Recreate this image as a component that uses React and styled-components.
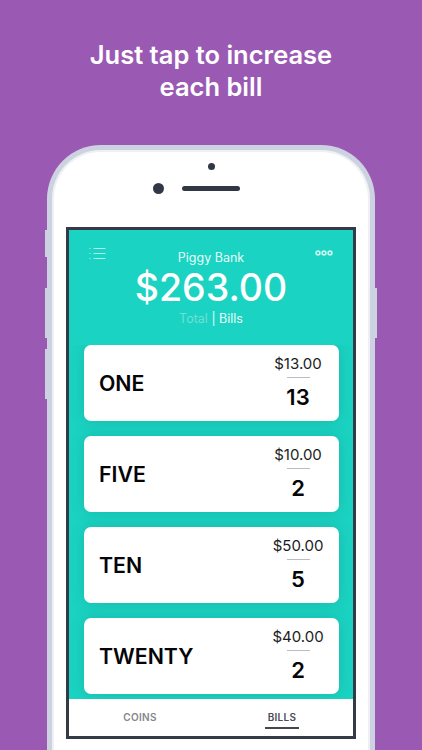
import styled, { createGlobalStyle } from "styled-components";

const GlobalStyle = createGlobalStyle`
  html, body {
    margin: 0;
    padding: 0;
    height: 750px;
    overflow: hidden;
    background: #9a5ab3;
    font-family: "Inter", "Liberation Sans", sans-serif;
  }
`;

const Page = styled.div`
  width: 422px;
  height: 750px;
  overflow: hidden;
  display: flex;
  flex-direction: column;
  align-items: center;
  background: #9a5ab3;
`;

const Headline = styled.h1`
  margin: 39px 0 0;
  font-size: 25.5px;
  line-height: 32px;
  font-weight: 600;
  color: #fff;
  text-align: center;
`;

const Phone = styled.div`
  position: relative;
  flex: none;
  box-sizing: border-box;
  width: 328px;
  height: 640px;
  margin-top: 42px;
  padding: 0 14px;
  background: #fff;
  border: 5px solid #cdd2e0;
  border-bottom: none;
  border-radius: 54px 54px 0 0;
  box-shadow: inset 0 0 0 2px #eef0f5;
`;

const SideButton = styled.span`
  position: absolute;
  top: ${(p) => p.$top}px;
  ${(p) => (p.$right ? "right: -7px;" : "left: -7px;")}
  width: 2px;
  height: ${(p) => p.$height}px;
  background: #cdd2e0;
`;

const Earpiece = styled.div`
  height: 77px;
  display: flex;
  flex-direction: column;
  align-items: center;
`;

const Camera = styled.span`
  width: 7px;
  height: 7px;
  margin-top: 13px;
  border-radius: 50%;
  background: #323745;
`;

const SpeakerRow = styled.div`
  position: relative;
  margin-top: 16px;
  width: 58px;
  height: 5px;
  border-radius: 3px;
  background: #323745;
`;

const FrontLens = styled.span`
  position: absolute;
  left: -29px;
  top: -3px;
  width: 11px;
  height: 11px;
  border-radius: 50%;
  background: #323745;
`;

const Screen = styled.div`
  box-sizing: border-box;
  width: 290px;
  height: 512px;
  display: flex;
  flex-direction: column;
  border: 3px solid #353a47;
  background: #1bd3c2;
`;

const Header = styled.div`
  position: relative;
  height: 115px;
  display: flex;
  flex-direction: column;
  align-items: center;
  color: #fff;
`;

const MenuIcon = styled.svg`
  position: absolute;
  left: 20px;
  top: 17px;
`;

const MoreIcon = styled.svg`
  position: absolute;
  right: 20px;
  top: 20px;
`;

const Title = styled.div`
  margin-top: 20px;
  font-size: 12.5px;
  line-height: 15px;
  color: #e6fbf8;
`;

const Total = styled.div`
  margin-top: 1px;
  font-size: 37.5px;
  line-height: 44px;
  font-weight: 500;
`;

const Switcher = styled.div`
  margin-top: 1px;
  font-size: 12.5px;
  line-height: 16px;
  color: #e6fbf8;
`;

const Dim = styled.span`
  color: #6fdfd8;
`;

const Cards = styled.div`
  flex: 1;
  min-height: 0;
  overflow: hidden;
  display: flex;
  flex-direction: column;
  gap: 15.3px;
  padding: 0 14px 0 15px;
`;

const Card = styled.div`
  flex: none;
  height: 75.7px;
  box-sizing: border-box;
  padding: 0 16px 0 15px;
  display: flex;
  align-items: center;
  justify-content: space-between;
  border-radius: 7px;
  background: #fff;
  box-shadow: 0 0 14px rgba(20, 130, 120, 0.32);
`;

const Name = styled.div`
  font-size: 21.3px;
  font-weight: 600;
  color: #050507;
`;

const Amounts = styled.div`
  width: 50px;
  display: flex;
  flex-direction: column;
  align-items: center;
`;

const Amount = styled.div`
  margin-top: 1px;
  font-size: 15px;
  line-height: 18px;
  white-space: nowrap;
  color: #1c1c22;
`;

const Divider = styled.span`
  width: 23px;
  height: 1px;
  margin-top: 4px;
  background: #b9bcc0;
`;

const Count = styled.div`
  margin-top: 4px;
  font-size: 22px;
  line-height: 30px;
  font-weight: 600;
  color: #050507;
`;

const Tabs = styled.div`
  flex: none;
  height: 37px;
  display: grid;
  grid-template-columns: 1fr 1fr;
  background: #fff;
`;

const Tab = styled.div`
  justify-self: center;
  height: 30px;
  padding: 0 3px 4px;
  box-sizing: border-box;
  display: flex;
  align-items: flex-end;
  font-size: 10px;
  line-height: 12px;
  font-weight: 600;
  letter-spacing: 0.3px;
  color: ${(p) => (p.$active ? "#4a4d57" : "#85878d")};
  border-bottom: 2px solid ${(p) => (p.$active ? "#44474f" : "transparent")};
`;

const bills = [
  { name: "ONE", amount: "$13.00", count: 13 },
  { name: "FIVE", amount: "$10.00", count: 2 },
  { name: "TEN", amount: "$50.00", count: 5 },
  { name: "TWENTY", amount: "$40.00", count: 2 },
];

const App = () => {
  return (
    <>
      <GlobalStyle />
      <Page>
        <Headline>
          Just tap to increase
          <br />
          each bill
        </Headline>
        <Phone>
          <SideButton $top={80} $height={27} />
          <SideButton $top={138} $height={50} />
          <SideButton $top={199} $height={50} />
          <SideButton $right $top={138} $height={50} />
          <Earpiece>
            <Camera />
            <SpeakerRow>
              <FrontLens />
            </SpeakerRow>
          </Earpiece>
          <Screen>
            <Header>
              <MenuIcon width="17" height="13" viewBox="0 0 17 13" fill="none" stroke="#aef0e8" strokeWidth="1">
                <path d="M4.5 1.5H16.5M4.5 6.5H16.5M4.5 11.5H16.5" />
                <path d="M0.5 1.5H1.5M0.5 6.5H1.5M0.5 11.5H1.5" />
              </MenuIcon>
              <MoreIcon width="18" height="6" viewBox="0 0 18 6" fill="none" stroke="#c8f5ef" strokeWidth="1.6">
                <circle cx="3" cy="3" r="1.9" />
                <circle cx="9" cy="3" r="1.9" />
                <circle cx="15" cy="3" r="1.9" />
              </MoreIcon>
              <Title>Piggy Bank</Title>
              <Total>$263.00</Total>
              <Switcher>
                <Dim>Total</Dim> | Bills
              </Switcher>
            </Header>
            <Cards>
              {bills.map((bill) => (
                <Card key={bill.name}>
                  <Name>{bill.name}</Name>
                  <Amounts>
                    <Amount>{bill.amount}</Amount>
                    <Divider />
                    <Count>{bill.count}</Count>
                  </Amounts>
                </Card>
              ))}
            </Cards>
            <Tabs>
              <Tab>COINS</Tab>
              <Tab $active>BILLS</Tab>
            </Tabs>
          </Screen>
        </Phone>
      </Page>
    </>
  );
};

export default App;
